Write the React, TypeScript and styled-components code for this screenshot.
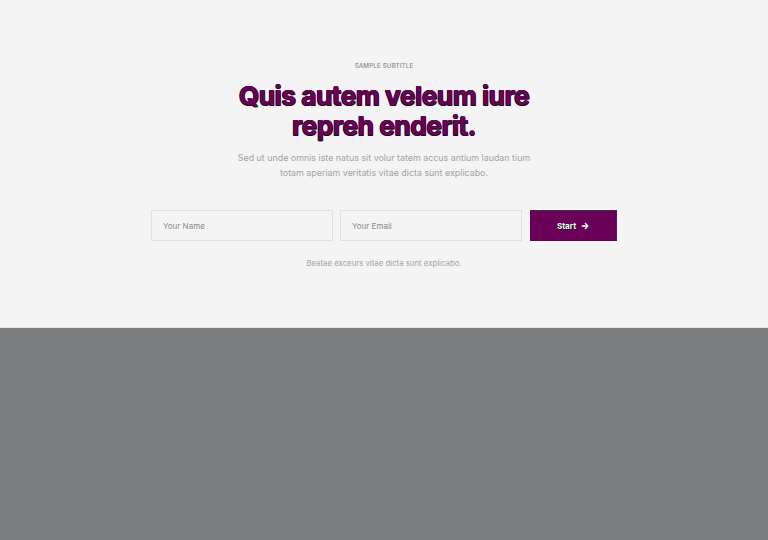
import React from "react";
import styled, { createGlobalStyle } from "styled-components";

const Global = createGlobalStyle`
  html, body { margin: 0; padding: 0; }
  body { background: #7b7c7d; font-family: Inter, "Noto Sans", sans-serif; }
  * { box-sizing: border-box; }
`;

const Hero = styled.section`
  background: #f4f4f4;
  height: 328px;
  border-bottom: 1px solid #e3e3e3;
  display: flex;
  flex-direction: column;
  align-items: center;
  padding-top: 61px;
`;

const Subtitle = styled.div`
  font-size: 6.3px;
  font-weight: 500;
  letter-spacing: 0.1px;
  color: #8a8a8a;
  text-transform: uppercase;
  line-height: 10px;
`;

const Title = styled.h1`
  margin: 10px 0 0;
  font-size: 26.3px;
  line-height: 30px;
  font-weight: 650;
  letter-spacing: -0.5px;
  text-align: center;
  color: #6b0058;
  text-shadow: 0.7px 0.7px 0 #1d0a19, -0.5px -0.2px 0 #1d0a19, 0.4px -0.3px 0 #1d0a19, -0.5px 0.5px 0 #1d0a19;
  width: 320px;
`;

const Lead = styled.p`
  margin: 9px 0 0;
  font-size: 8.9px;
  line-height: 15px;
  color: #a3a3a3;
  text-align: center;
  width: 300px;
`;

const Form = styled.form`
  margin-top: 30px;
  display: flex;
  gap: 7px;
  width: 466px;
`;

const Field = styled.input`
  width: 182px;
  height: 31px;
  border: 1px solid #e0e0e0;
  background: #f4f4f4;
  padding: 0 11px;
  font-family: Inter, sans-serif;
  font-size: 8px;
  color: #333;
  outline: none;
  &::placeholder { color: #8a8a8a; }
`;

const Button = styled.button`
  margin-left: 1px;
  width: 87px;
  height: 31px;
  border: none;
  border-top: 1px solid #333;
  border-right: 1px solid #333;
  background: #6b0058;
  color: #fff;
  font-family: Inter, sans-serif;
  font-size: 8px;
  font-weight: 700;
  text-shadow: 0.7px 0.7px 0 #111, -0.5px -0.5px 0 #111;
  display: flex;
  align-items: center;
  justify-content: center;
  gap: 5px;
  cursor: pointer;
`;

const Note = styled.p`
  margin: 17px 0 0;
  font-size: 7.8px;
  color: #a3a3a3;
`;

export default function App() {
  return (
    <>
      <Global />
      <Hero>
        <Subtitle>Sample Subtitle</Subtitle>
        <Title>Quis autem veleum iure repreh enderit.</Title>
        <Lead>
          Sed ut unde omnis iste natus sit volur tatem accus antium laudan tium totam aperiam veritatis vitae dicta sunt explicabo.
        </Lead>
        <Form onSubmit={(e) => e.preventDefault()}>
          <Field placeholder="Your Name" />
          <Field placeholder="Your Email" />
          <Button type="submit">
            Start
            <svg width="8" height="8" viewBox="0 0 10 10" fill="none" stroke="#fff" strokeWidth="1.8" strokeLinecap="round" strokeLinejoin="round" style={{ filter: "drop-shadow(0.7px 0.7px 0 #111)" }}>
              <path d="M1.5 5h7M5.5 2l3 3-3 3" />
            </svg>
          </Button>
        </Form>
        <Note>Beatae exceurs vitae dicta sunt explicabo.</Note>
      </Hero>
    </>
  );
}
